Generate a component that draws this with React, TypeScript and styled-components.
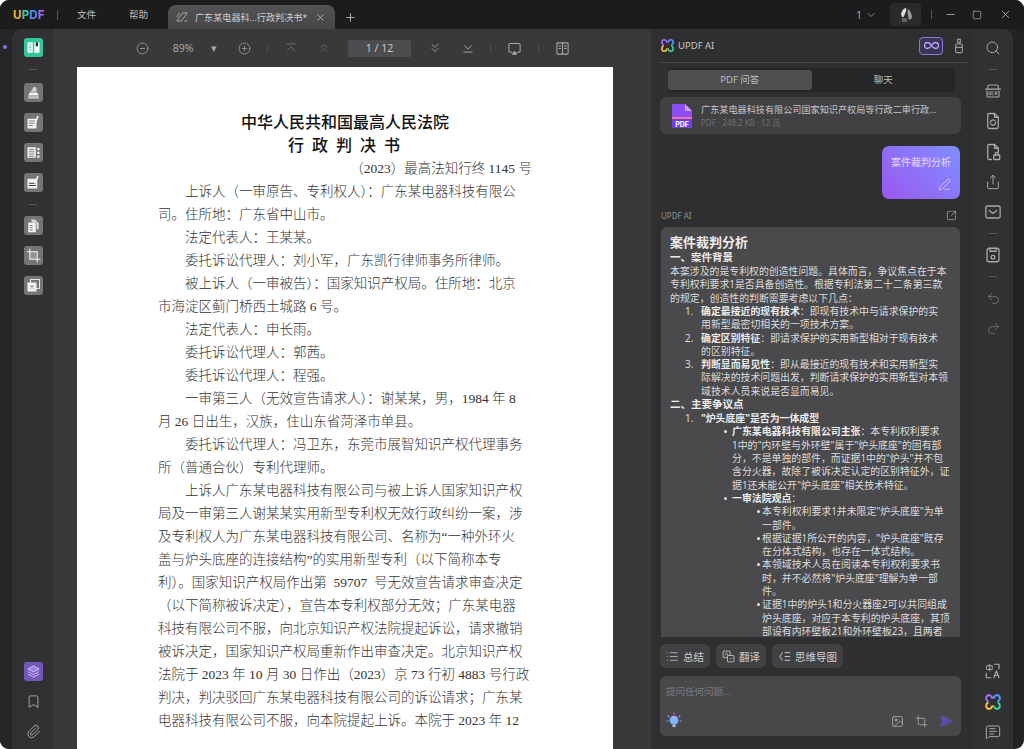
import React from "react";
import styled, { createGlobalStyle } from "styled-components";
import {
  Bookmark,
  ChevronDown,
  ChevronsDown,
  ChevronsUp,
  CircleMinus,
  CirclePlus,
  Crop,
  Image as ImageIcon,
  List,
  MessageSquareText,
  Minus,
  Paperclip,
  PenLine,
  Plus,
  Redo2,
  Search,
  SendHorizontal,
  Share,
  Square,
  SquareArrowOutUpRight,
  Undo2,
  X,
} from "lucide-react";

const SANS = `"Noto Sans", "Noto Sans CJK SC", sans-serif`;

const GlobalStyle = createGlobalStyle`
  html, body {
    margin: 0;
    padding: 0;
    background: #fff;
    overflow: hidden;
  }
  * { box-sizing: border-box; }
`;

const Win = styled.div`
  width: 1024px;
  height: 749px;
  display: flex;
  flex-direction: column;
  background: #222223;
  border-radius: 9px;
  overflow: hidden;
  font-family: ${SANS};
  color: #d8d8d8;
`;

const TitleBar = styled.div`
  height: 29px;
  flex: none;
  display: flex;
  align-items: flex-end;
  padding-left: 13px;
  background: #1c1c1d;
`;

const Logo = styled.div`
  width: 44px;
  height: 24px;
  line-height: 20px;
  font-size: 11.5px;
  font-weight: 700;
  font-family: "Inter", sans-serif;
  letter-spacing: 0.2px;
`;

const LogoLetter = styled.span<{ $c: string }>`
  color: ${(p) => p.$c};
`;

const BarSep = styled.div<{ $h?: number; $c?: string }>`
  width: 1px;
  height: ${(p) => p.$h ?? 10}px;
  background: ${(p) => p.$c ?? "#555"};
  flex: none;
`;

const TopMenu = styled.div`
  height: 24px;
  line-height: 20px;
  font-size: 9.6px;
  color: #bdbdbd;
  margin-left: 19px;
  width: 33px;
`;

const LogoSepWrap = styled.div`
  height: 24px;
  padding-top: 5px;
`;

const Tab = styled.div`
  width: 167px;
  height: 24px;
  margin-left: 6px;
  padding: 0 9px 0 7px;
  display: flex;
  align-items: center;
  background: linear-gradient(#535355, #464648);
  border-radius: 8px 8px 0 0;
  font-size: 9.1px;
  color: #cfcfcf;
  white-space: nowrap;
`;

const TabName = styled.span`
  flex: 1;
  margin-left: 6px;
`;

const NewTab = styled.div`
  height: 24px;
  margin-left: 9px;
  display: flex;
  align-items: center;
  color: #bdbdbd;
`;

const TitleRight = styled.div`
  margin-left: auto;
  height: 29px;
  display: flex;
  align-items: center;
  color: #a8a8a8;
`;

const PageCount = styled.div`
  display: flex;
  align-items: center;
  gap: 3px;
  font-size: 10.5px;
  margin-right: 13px;
`;

const Avatar = styled.div`
  width: 31px;
  height: 23px;
  border-radius: 4px;
  background: #2a2a2b;
  display: flex;
  align-items: center;
  justify-content: center;
  margin-right: 10px;
`;

const WinButton = styled.div<{ $w: number }>`
  width: ${(p) => p.$w}px;
  display: flex;
  justify-content: center;
  color: #b4b4b4;
`;

const Body = styled.div`
  flex: 1;
  min-height: 0;
  display: flex;
  margin: 0 11px 0 0;
  position: relative;
`;

const DotCol = styled.div`
  width: 12px;
  flex: none;
  background: #262627;
  display: flex;
  justify-content: center;
  padding: 16px 3px 0 0;
`;

const Dot = styled.div`
  width: 4px;
  height: 4px;
  border-radius: 50%;
  background: #8a75e0;
`;

const Panel = styled.div`
  flex: 1;
  min-width: 0;
  display: flex;
  border-radius: 10px 10px 0 0;
  overflow: hidden;
  background: #333335;
`;

const Rail = styled.div<{ $w: number }>`
  width: ${(p) => p.$w}px;
  flex: none;
  display: flex;
  flex-direction: column;
  align-items: center;
  background: #313133;
  padding-top: 4px;
  padding-bottom: 2px;
`;

const RailSep = styled.div<{ $after?: number }>`
  width: 8px;
  height: 1px;
  background: #5a5a5c;
  margin: 6px 0 ${(p) => p.$after ?? 6}px;
`;

const RailPush = styled.div`
  margin-top: auto;
  display: flex;
  flex-direction: column;
  align-items: center;
`;

const Tile = styled.div<{ $bg?: string }>`
  width: 19px;
  height: 19px;
  margin: 5px 0 6px;
  border-radius: 3px;
  background: ${(p) => p.$bg ?? "#757577"};
  display: flex;
  align-items: center;
  justify-content: center;
  color: #f2f2f2;
`;

const RailIcon = styled.div<{ $c?: string }>`
  width: 20px;
  height: 20px;
  margin: 5px 0 5.2px;
  display: flex;
  align-items: center;
  justify-content: center;
  color: ${(p) => p.$c ?? "#a9a9a9"};
`;

const Center = styled.div`
  width: 597px;
  flex: none;
  display: flex;
  flex-direction: column;
  background: #39393b;
`;

const Toolbar = styled.div`
  height: 38px;
  flex: none;
  display: flex;
  align-items: center;
  padding-left: 71px;
  color: #a6a6a6;
`;

const ToolCell = styled.div<{ $w: number; $c?: string }>`
  width: ${(p) => p.$w}px;
  flex: none;
  display: flex;
  align-items: center;
  justify-content: center;
  font-size: 10.5px;
  color: ${(p) => p.$c ?? "inherit"};
`;

const PageBox = styled.div`
  width: 63px;
  height: 17px;
  margin-left: 14px;
  flex: none;
  border-radius: 2px;
  background: #4d4d4f;
  color: #c8c8c8;
  font-size: 10.5px;
  line-height: 17px;
  text-align: center;
`;

const DocArea = styled.div`
  flex: 1;
  min-height: 0;
  padding-left: 23px;
  overflow: hidden;
`;

const Page = styled.div`
  width: 536px;
  height: 700px;
  background: #fff;
  color: #333;
  padding: 44px 0 0 81px;
  font-family: "Liberation Serif", "Noto Sans CJK SC", serif;
  font-size: 13.5px;
  font-weight: 300;
  line-height: 23px;
  white-space: nowrap;
  overflow: hidden;
`;

const DocTitle = styled.div<{ $spaced?: boolean }>`
  width: 374px;
  text-align: center;
  font-family: ${SANS};
  font-size: 16px;
  font-weight: 500;
  color: #111;
  letter-spacing: ${(p) => (p.$spaced ? "8px" : "0")};
  margin-left: ${(p) => (p.$spaced ? "3px" : "0")};
`;

const CaseNo = styled.div`
  width: 374px;
  text-align: right;
`;

const DocLine = styled.div<{ $indent?: boolean }>`
  padding-left: ${(p) => (p.$indent ? "27px" : "0")};
`;

const AiPanel = styled.div`
  flex: 1;
  min-width: 0;
  display: flex;
  flex-direction: column;
  padding: 0 12px 14px 9px;
  background: #2f2f31;
`;

const AiHead = styled.div`
  height: 34px;
  flex: none;
  display: flex;
  align-items: center;
  border-bottom: 1px solid #4a4a4c;
  font-size: 9.5px;
  color: #c9c9c9;
  gap: 3px;
  margin-right: -6px;
  padding-right: 2px;
`;

const AiHeadRight = styled.div`
  margin-left: auto;
  display: flex;
  align-items: center;
  gap: 10px;
`;

const InfinityBadge = styled.div`
  width: 24px;
  height: 18px;
  border: 1px solid #8f76d8;
  border-radius: 4px;
  background: #3a3550;
  color: #b9a2ff;
  display: flex;
  align-items: center;
  justify-content: center;
`;

const Tabs = styled.div`
  height: 24px;
  flex: none;
  margin: 5px 6px 0 8px;
  padding: 2px 0;
  display: flex;
  border-radius: 3px;
  background: #262628;
`;

const TabBtn = styled.div<{ $on?: boolean }>`
  flex: 1;
  border-radius: 3px;
  background: ${(p) => (p.$on ? "#4e4e50" : "transparent")};
  font-size: 9.5px;
  line-height: 20px;
  text-align: center;
  color: #bdbdbd;
`;

const FileCard = styled.div`
  height: 37px;
  flex: none;
  margin-top: 5px;
  border-radius: 6px;
  background: #414143;
  display: flex;
  align-items: center;
  padding-left: 12px;
  gap: 9px;
`;

const FileMeta = styled.div`
  display: flex;
  flex-direction: column;
  white-space: nowrap;
`;

const FileName = styled.div`
  font-size: 9.15px;
  line-height: 13px;
  color: #c6c6c6;
`;

const FileSub = styled.div`
  font-size: 8px;
  line-height: 13px;
  color: #6f6f71;
`;

const Bubble = styled.div`
  width: 78px;
  height: 53px;
  flex: none;
  margin: 12px 1px 0 auto;
  border-radius: 7px;
  background: linear-gradient(45deg, #9a58f0, #7f8eff);
  padding: 8px 9px;
  display: flex;
  flex-direction: column;
  align-items: flex-end;
  justify-content: space-between;
  font-size: 10px;
  color: #e6dcff;
  white-space: nowrap;
`;

const AiLabelRow = styled.div`
  height: 16px;
  flex: none;
  margin-top: 8px;
  padding: 0 4px 0 1px;
  display: flex;
  align-items: center;
  justify-content: space-between;
  font-size: 8px;
  color: #8f8f91;
`;

const Answer = styled.div`
  flex: none;
  height: 410px;
  margin: 4px 1px 0 1px;
  padding: 6px 9px 0;
  border-radius: 6px 6px 0 0;
  background: #4a4a4c;
  overflow: hidden;
  font-size: 9.9px;
  line-height: 13.3px;
  color: #dcdcdc;
  white-space: nowrap;
`;

const AnswerTitle = styled.div`
  font-size: 13px;
  line-height: 18px;
  font-weight: 700;
  color: #ececec;
`;

const AnswerHead = styled.div`
  font-size: 10.5px;
  font-weight: 700;
  color: #ececec;
  margin-bottom: 0.8px;
`;

const OrderedList = styled.ol`
  margin: 0;
  padding-left: 31px;
  > li::marker {
    content: counter(list-item) ".   ";
  }
`;

const BulletList = styled.ul<{ $pad: number }>`
  margin: 0;
  padding-left: ${(p) => p.$pad}px;
  list-style: none;
`;

const Bullet = styled.li<{ $off?: number }>`
  position: relative;
  &::before {
    content: "";
    position: absolute;
    left: -${(p) => p.$off ?? 8}px;
    top: 5px;
    width: 3px;
    height: 3px;
    border-radius: 50%;
    background: #e8e8e8;
  }
`;

const Strong = styled.b`
  font-weight: 700;
  color: #ececec;
`;

const ChipRow = styled.div`
  flex: none;
  display: flex;
  gap: 6px;
  margin-top: 7px;
`;

const Chip = styled.div`
  height: 24px;
  padding: 0 6px;
  display: flex;
  align-items: center;
  gap: 4px;
  border-radius: 6px;
  background: #414143;
  font-size: 10.5px;
  color: #cfcfcf;
`;

const InputBox = styled.div`
  height: 60px;
  flex: none;
  margin-top: 8px;
  padding: 9px 6px 6px;
  border-radius: 6px;
  background: #48484a;
  display: flex;
  flex-direction: column;
  justify-content: space-between;
`;

const Placeholder = styled.div`
  font-size: 9.5px;
  line-height: 14px;
  color: #7b7b7d;
`;

const InputTools = styled.div`
  display: flex;
  align-items: center;
  gap: 11px;
  padding-right: 2px;
  color: #b0b0b0;
`;

const Bulb = styled.div`
  width: 16px;
  height: 18px;
  margin-right: auto;
  display: flex;
  align-items: center;
  justify-content: center;
`;

type SvgProps = { size?: number };

const Svg = ({ size = 16, children }: SvgProps & { children: React.ReactNode }) => (
  <svg width={size} height={size} viewBox="0 0 24 24" fill="none" stroke="currentColor" strokeWidth="1.7" strokeLinecap="round" strokeLinejoin="round">
    {children}
  </svg>
);

// four-lobe ai mark
const AiMark = ({ size = 16 }: SvgProps) => (
  <svg width={size} height={size} viewBox="0 0 24 24" fill="none" strokeWidth="2.6" strokeLinecap="round">
    <path d="M11 6.500C10 3 6.500 2 4.500 3.500S2 8.500 5 11" stroke="#a66bff" />
    <path d="M13 6.500C14 3 17.500 2 19.500 3.500S22 8.500 19 11" stroke="#4f9bff" />
    <path d="M5 13C2 15.500 2.500 19 4.500 20.500S10 21 11 17.500" stroke="#ffc233" />
    <path d="M19 13C22 15.500 21.500 19 19.500 20.500S14 21 13 17.500" stroke="#35d6a0" />
  </svg>
);

const FirstPage = () => (
  <Svg size={14}>
    <path d="M5 5h14" />
    <path d="M6 16l6-6 6 6" />
  </Svg>
);

const LastPage = () => (
  <Svg size={14}>
    <path d="M6 8l6 6 6-6" />
    <path d="M5 19h14" />
  </Svg>
);

const Present = () => (
  <Svg size={15}>
    <path d="M8 18H5a2 2 0 0 1-2-2V6a2 2 0 0 1 2-2h14a2 2 0 0 1 2 2v10a2 2 0 0 1-2 2h-3" />
    <path d="M9 21l3-4 3 4z" fill="currentColor" />
  </Svg>
);

const Spread = () => (
  <Svg size={15}>
    <rect x="3" y="3" width="18" height="18" rx="1.500" />
    <path d="M12 3v18M6 8h3M6 12h3M15 8h3M15 12h3" />
  </Svg>
);

const OcrIcon = () => (
  <svg width="18" height="18" viewBox="0 0 24 24" fill="none" stroke="currentColor" strokeWidth="1.5" strokeLinecap="round">
    <path d="M5 9V6a2 2 0 0 1 2-2h10a2 2 0 0 1 2 2v3" />
    <path d="M2 9.500h20" />
    <path d="M4 12v7a1 1 0 0 0 1 1h14a1 1 0 0 0 1-1v-7" />
    <path d="M7 13h2v4H7zM12.500 13h-2v4h2M15 17v-4h2v2h-2M16.400 15l1 2" strokeWidth="1" />
  </svg>
);

const FileRefresh = () => (
  <Svg size={18}>
    <path d="M14 2H7a2 2 0 0 0-2 2v16a2 2 0 0 0 2 2h10a2 2 0 0 0 2-2V7z" />
    <path d="M14 2v5h5" />
    <path d="M8.500 14a3.500 3.500 0 0 1 6-2.400M15.500 14a3.500 3.500 0 0 1-6 2.400" />
  </Svg>
);

const FileLock = () => (
  <Svg size={18}>
    <path d="M10 22H7a2 2 0 0 1-2-2V4a2 2 0 0 1 2-2h7l5 5v5" />
    <path d="M14 2v5h5" />
    <rect x="13" y="16" width="8" height="6" rx="1" />
    <path d="M15 16v-1.500a2 2 0 0 1 4 0V16" />
  </Svg>
);

const MailBox = () => (
  <Svg size={18}>
    <rect x="2.500" y="4" width="19" height="16" rx="2" />
    <path d="M7 10l5 4 5-4" />
  </Svg>
);

const SaveIcon = () => (
  <Svg size={18}>
    <rect x="4" y="3" width="16" height="18" rx="3" />
    <path d="M8 3v4h8V3" />
    <circle cx="12" cy="15" r="2.500" />
  </Svg>
);

const Translate = () => (
  <svg width="18" height="18" viewBox="0 0 24 24" fill="none" stroke="currentColor" strokeWidth="1.6" strokeLinecap="round" strokeLinejoin="round">
    <path d="M14 3h6v6M3 15v6h6" />
    <rect x="4" y="5" width="7" height="5" strokeWidth="1.3" />
    <path d="M7.500 3v9" strokeWidth="1.3" />
    <path d="M13 21l3.500-9 3.500 9M14.200 18h4.600" />
  </svg>
);

const TransChip = () => (
  <svg width="13" height="13" viewBox="0 0 24 24" fill="none" stroke="currentColor" strokeWidth="1.5">
    <rect x="2" y="2" width="13" height="12" rx="1" />
    <rect x="10" y="10" width="12" height="12" rx="1" fill="#414143" />
    <path d="M6 10l2.500-5 2.500 5M14 16h4" strokeWidth="1.2" />
  </svg>
);

const MindMap = () => (
  <svg width="13" height="13" viewBox="0 0 24 24" fill="none" stroke="currentColor" strokeWidth="1.7" strokeLinecap="round">
    <path d="M13 5h9M13 12h9M13 19h9" />
    <path d="M8 5C5 5 6 12 3 12c3 0 2 7 5 7" />
  </svg>
);

const InfinityGlyph = () => (
  <svg width="15" height="9" viewBox="0 0 30 16" fill="none" stroke="currentColor" strokeWidth="2.6">
    <path d="M15 8c-3-5-5-6-8-6a6 6 0 0 0 0 12c3 0 5-1 8-6s5-6 8-6a6 6 0 0 1 0 12c-3 0-5-1-8-6z" />
  </svg>
);

const Bottle = () => (
  <svg width="12" height="16" viewBox="0 0 16 24" fill="none" stroke="#9c9c9e" strokeWidth="1.7">
    <path d="M6 2h4v5H6z" />
    <rect x="3" y="9" width="10" height="13" rx="2" />
    <path d="M3 14h10" />
  </svg>
);

const PdfFile = () => (
  <svg width="20" height="24" viewBox="0 0 20 24">
    <path d="M1 0h12l7 7v17H1a1 1 0 0 1-1-1V1a1 1 0 0 1 1-1z" fill="#8c4df2" />
    <path d="M13 0l7 7h-6a1 1 0 0 1-1-1z" fill="#c7a3ff" />
    <rect x="0" y="13" width="20" height="2" fill="#ff6fa8" />
    <rect x="0" y="15" width="20" height="9" fill="#6d3fe0" />
    <text x="10" y="22.500" fontSize="7" fontWeight="700" textAnchor="middle" fill="#fff" fontFamily="Inter, sans-serif">PDF</text>
  </svg>
);

const BulbIcon = () => (
  <svg width="16" height="18" viewBox="0 0 24 26" fill="none">
    <circle cx="12" cy="12" r="6.500" fill="#7fb4ff" />
    <path d="M8 8a6 6 0 0 1 8 0" stroke="#c49bff" strokeWidth="2" />
    <rect x="9.500" y="19" width="5" height="3" rx="1" fill="#c9b4ff" />
    <path d="M12 1v2M3 5l2 2M21 5l-2 2M1 13h2M21 13h2" stroke="#a88cf0" strokeWidth="1.6" strokeLinecap="round" />
  </svg>
);

const TabMark = () => (
  <svg width="14" height="14" viewBox="0 0 24 24" fill="none" stroke="#a9a9a9" strokeWidth="1.7">
    <path d="M3 19L13 5h8L11 19z" />
    <path d="M16 19h5" />
    <path d="M3 12l5-7" />
  </svg>
);

const AvatarPic = () => (
  <svg width="16" height="18" viewBox="0 0 16 18">
    <path d="M1 18c0-8 2-16 7-16s7 8 7 16z" fill="#2d2d2e" />
    <path d="M3 8c1-4 3-6 5-6 1 2-1 6-2 8s-2 2-3-2z" fill="#dcdcdc" />
    <path d="M10 3c2 1 4 5 4 9l-3 2c-1-4-2-7-1-11z" fill="#9a9a9a" />
    <rect x="4" y="12" width="5" height="4" fill="#606060" />
  </svg>
);

// left rail glyphs, white on a grey tile
const Highlighter = () => (
  <svg width="15" height="15" viewBox="0 0 20 20" fill="currentColor">
    <path d="M11 2l3 2v5H6z" opacity=".75" />
    <path d="M5 10h10l2 4H3z" />
    <rect x="3" y="15" width="14" height="3" opacity=".7" />
  </svg>
);

const EditText = () => (
  <svg width="15" height="15" viewBox="0 0 20 20" fill="currentColor">
    <rect x="2" y="5" width="12" height="13" />
    <path d="M4 8h8M4 11h8M4 14h5" stroke="#757577" strokeWidth="1.2" />
    <path d="M15 1l2 1-4 10-2 1 0-2z" />
  </svg>
);

const Columns = () => (
  <svg width="15" height="15" viewBox="0 0 20 20" fill="currentColor">
    <rect x="2" y="3" width="11" height="14" />
    <path d="M4 6h7M4 9h7M4 12h7M4 15h7" stroke="#757577" strokeWidth="1.2" />
    <rect x="15" y="4" width="3" height="3" />
    <rect x="15" y="9" width="3" height="3" />
    <rect x="15" y="14" width="3" height="3" />
  </svg>
);

const FormIcon = () => (
  <svg width="15" height="15" viewBox="0 0 20 20" fill="currentColor">
    <rect x="2" y="5" width="13" height="13" />
    <path d="M4 11h9M4 14h9" stroke="#333" strokeWidth="1.6" />
    <path d="M15 1l2 1-4 9-2 1 0-2z" />
  </svg>
);

const PagesIcon = () => (
  <svg width="15" height="15" viewBox="0 0 20 20" fill="currentColor">
    <path d="M6 2h6l5 5v8h-3V6h-5z" opacity=".8" />
    <rect x="3" y="6" width="10" height="13" />
    <path d="M5 10h4M5 13h4M5 16h4" stroke="#757577" strokeWidth="1.2" />
  </svg>
);

const CropTile = () => (
  <svg width="15" height="15" viewBox="0 0 20 20" fill="none" stroke="currentColor" strokeWidth="1.4">
    <path d="M5 1v14h14M1 5h14v14" />
    <rect x="5" y="5" width="10" height="10" fill="currentColor" opacity=".25" stroke="none" />
  </svg>
);

const StackTile = () => (
  <svg width="15" height="15" viewBox="0 0 20 20" fill="currentColor">
    <rect x="6" y="2" width="12" height="12" fill="none" stroke="currentColor" strokeWidth="1.2" />
    <rect x="2" y="6" width="12" height="12" />
    <path d="M6 10l4 4M10 10l-4 4" stroke="#757577" strokeWidth="1.4" />
  </svg>
);

const ReaderTile = () => (
  <svg width="15" height="15" viewBox="0 0 20 20" fill="#f4fff9">
    <path d="M2 3h7v14H2zM11 3h7v14h-7z" />
    <path d="M4 7h3M4 10h3M4 13h3" stroke="#2fc79b" strokeWidth="1.2" />
    <path d="M13 3h3v6l-1.500-1.500L13 9z" fill="#2a2a2a" />
  </svg>
);

const LayersTile = () => (
  <svg width="15" height="15" viewBox="0 0 24 24" fill="none" stroke="#cdbdff" strokeWidth="1.6" strokeLinejoin="round">
    <path d="M12 3l9 5-9 5-9-5z" fill="#cdbdff" fillOpacity=".45" />
    <path d="M3 12l9 5 9-5M3 16l9 5 9-5" />
  </svg>
);

const docLines: [string, boolean][] = [
  ["上诉人（一审原告、专利权人）：广东某电器科技有限公", true],
  ["司。住所地：广东省中山市。", false],
  ["法定代表人：王某某。", true],
  ["委托诉讼代理人：刘小军，广东凯行律师事务所律师。", true],
  ["被上诉人（一审被告）：国家知识产权局。住所地：北京", true],
  ["市海淀区蓟门桥西土城路 6 号。", false],
  ["法定代表人：申长雨。", true],
  ["委托诉讼代理人：郭茜。", true],
  ["委托诉讼代理人：程强。", true],
  ["一审第三人（无效宣告请求人）：谢某某，男，1984 年 8", true],
  ["月 26 日出生，汉族，住山东省菏泽市单县。", false],
  ["委托诉讼代理人：冯卫东，东莞市展智知识产权代理事务", true],
  ["所（普通合伙）专利代理师。", false],
  ["上诉人广东某电器科技有限公司与被上诉人国家知识产权", true],
  ["局及一审第三人谢某某实用新型专利权无效行政纠纷一案，涉", false],
  ["及专利权人为广东某电器科技有限公司、名称为“一种外环火", false],
  ["盖与炉头底座的连接结构”的实用新型专利（以下简称本专", false],
  ["利）。国家知识产权局作出第\u00a0\u00a059707\u00a0\u00a0号无效宣告请求审查决定", false],
  ["（以下简称被诉决定），宣告本专利权部分无效；广东某电器", false],
  ["科技有限公司不服，向北京知识产权法院提起诉讼，请求撤销", false],
  ["被诉决定，国家知识产权局重新作出审查决定。北京知识产权", false],
  ["法院于 2023 年 10 月 30 日作出（2023）京 73 行初 4883 号行政", false],
  ["判决，判决驳回广东某电器科技有限公司的诉讼请求；广东某", false],
  ["电器科技有限公司不服，向本院提起上诉。本院于 2023 年 12", false],
];

export default function App() {
  return (
    <>
      <GlobalStyle />
      <Win>
        <TitleBar>
          <Logo>
            <LogoLetter $c="#f2b632">U</LogoLetter>
            <LogoLetter $c="#3fc6a8">P</LogoLetter>
            <LogoLetter $c="#5a8cf5">D</LogoLetter>
            <LogoLetter $c="#a66bf0">F</LogoLetter>
          </Logo>
          <LogoSepWrap>
            <BarSep />
          </LogoSepWrap>
          <TopMenu>文件</TopMenu>
          <TopMenu>帮助</TopMenu>
          <Tab>
            <TabMark />
            <TabName>广东某电器科...行政判决书*</TabName>
            <X size={11} strokeWidth={1.6} />
          </Tab>
          <NewTab>
            <Plus size={13} strokeWidth={1.6} />
          </NewTab>
          <TitleRight>
            <PageCount>
              1 <ChevronDown size={12} strokeWidth={1.4} />
            </PageCount>
            <Avatar>
              <AvatarPic />
            </Avatar>
            <BarSep $h={9} />
            <WinButton $w={36}>
              <Minus size={13} strokeWidth={1.5} />
            </WinButton>
            <WinButton $w={18}>
              <Square size={10} strokeWidth={1.6} />
            </WinButton>
            <WinButton $w={38}>
              <X size={13} strokeWidth={1.5} />
            </WinButton>
          </TitleRight>
        </TitleBar>
        <Body>
          <DotCol>
            <Dot />
          </DotCol>
          <Panel>
            <Rail $w={42}>
              <Tile $bg="#2fc79b">
                <ReaderTile />
              </Tile>
              <RailSep $after={8} />
              <Tile><Highlighter /></Tile>
              <Tile><EditText /></Tile>
              <Tile><Columns /></Tile>
              <Tile><FormIcon /></Tile>
              <RailSep />
              <Tile><PagesIcon /></Tile>
              <Tile><CropTile /></Tile>
              <Tile><StackTile /></Tile>
              <RailPush>
                <Tile $bg="#7358b8"><LayersTile /></Tile>
                <RailIcon><Bookmark size={15} strokeWidth={1.5} /></RailIcon>
                <RailIcon><Paperclip size={15} strokeWidth={1.5} /></RailIcon>
              </RailPush>
            </Rail>
            <Center>
              <Toolbar>
                <ToolCell $w={34}><CircleMinus size={13} strokeWidth={1.4} /></ToolCell>
                <ToolCell $w={48}>89%</ToolCell>
                <ToolCell $w={14}>▾</ToolCell>
                <ToolCell $w={46}><CirclePlus size={13} strokeWidth={1.4} /></ToolCell>
                <BarSep $h={9} $c="#4c4c4e" />
                <ToolCell $w={46} $c="#707072"><FirstPage /></ToolCell>
                <ToolCell $w={20} $c="#707072"><ChevronsUp size={14} strokeWidth={1.5} /></ToolCell>
                <PageBox>1 / 12</PageBox>
                <ToolCell $w={48}><ChevronsDown size={14} strokeWidth={1.5} /></ToolCell>
                <ToolCell $w={18}><LastPage /></ToolCell>
                <ToolCell $w={13} />
                <BarSep $h={9} $c="#4c4c4e" />
                <ToolCell $w={47}><Present /></ToolCell>
                <BarSep $h={9} $c="#4c4c4e" />
                <ToolCell $w={47}><Spread /></ToolCell>
              </Toolbar>
              <DocArea>
                <Page>
                  <DocTitle>中华人民共和国最高人民法院</DocTitle>
                  <DocTitle $spaced>行政判决书</DocTitle>
                  <CaseNo>（2023）最高法知行终 1145 号</CaseNo>
                  {docLines.map(([text, indent]) => (
                    <DocLine key={text} $indent={indent}>
                      {text}
                    </DocLine>
                  ))}
                </Page>
              </DocArea>
            </Center>
            <AiPanel>
              <AiHead>
                <AiMark size={15} />
                UPDF AI
                <AiHeadRight>
                  <InfinityBadge><InfinityGlyph /></InfinityBadge>
                  <Bottle />
                </AiHeadRight>
              </AiHead>
              <Tabs>
                <TabBtn $on>PDF 问答</TabBtn>
                <TabBtn>聊天</TabBtn>
              </Tabs>
              <FileCard>
                <PdfFile />
                <FileMeta>
                  <FileName>广东某电器科技有限公司国家知识产权局等行政二审行政...</FileName>
                  <FileSub>PDF · 248.2 KB · 12 页</FileSub>
                </FileMeta>
              </FileCard>
              <Bubble>
                案件裁判分析
                <PenLine size={13} strokeWidth={1.5} />
              </Bubble>
              <AiLabelRow>
                UPDF AI
                <SquareArrowOutUpRight size={11} strokeWidth={1.5} color="#b5b5b5" />
              </AiLabelRow>
              <Answer>
                <AnswerTitle>案件裁判分析</AnswerTitle>
                <AnswerHead>一、案件背景</AnswerHead>
                本案涉及的是专利权的创造性问题。具体而言，争议焦点在于本
                <br />
                专利权利要求1是否具备创造性。根据专利法第二十二条第三款
                <br />
                的规定，创造性的判断需要考虑以下几点：
                <OrderedList>
                  <li>
                    <Strong>确定最接近的现有技术</Strong>：即现有技术中与请求保护的实
                    <br />
                    用新型最密切相关的一项技术方案。
                  </li>
                  <li>
                    <Strong>确定区别特征</Strong>：即请求保护的实用新型相对于现有技术
                    <br />
                    的区别特征。
                  </li>
                  <li>
                    <Strong>判断显而易见性</Strong>：即从最接近的现有技术和实用新型实
                    <br />
                    际解决的技术问题出发，判断请求保护的实用新型对本领
                    <br />
                    域技术人员来说是否显而易见。
                  </li>
                </OrderedList>
                <AnswerHead>二、主要争议点</AnswerHead>
                <OrderedList>
                  <li>
                    <Strong>"炉头底座"是否为一体成型</Strong>
                    <BulletList $pad={31}>
                      <Bullet>
                        <Strong>广东某电器科技有限公司主张</Strong>：本专利权利要求
                        <br />
                        1中的"内环壁与外环壁"属于"炉头底座"的固有部
                        <br />
                        分，不是单独的部件，而证据1中的"炉头"并不包
                        <br />
                        含分火器，故除了被诉决定认定的区别特征外，证
                        <br />
                        据1还未能公开"炉头底座"相关技术特征。
                      </Bullet>
                      <Bullet>
                        <Strong>一审法院观点</Strong>：
                        <BulletList $pad={30}>
                          <Bullet $off={5}>
                            本专利权利要求1并未限定"炉头底座"为单
                            <br />
                            一部件。
                          </Bullet>
                          <Bullet $off={5}>
                            根据证据1所公开的内容，"炉头底座"既存
                            <br />
                            在分体式结构，也存在一体式结构。
                          </Bullet>
                          <Bullet $off={5}>
                            本领域技术人员在阅读本专利权利要求书
                            <br />
                            时，并不必然将"炉头底座"理解为单一部
                            <br />
                            件。
                          </Bullet>
                          <Bullet $off={5}>
                            证据1中的炉头1和分火器座2可以共同组成
                            <br />
                            炉头底座，对应于本专利的炉头底座，其顶
                            <br />
                            部设有内环壁板21和外环壁板23，且两者
                          </Bullet>
                        </BulletList>
                      </Bullet>
                    </BulletList>
                  </li>
                </OrderedList>
              </Answer>
              <ChipRow>
                <Chip><List size={13} strokeWidth={1.3} />总结</Chip>
                <Chip><TransChip />翻译</Chip>
                <Chip><MindMap />思维导图</Chip>
              </ChipRow>
              <InputBox>
                <Placeholder>提问任何问题...</Placeholder>
                <InputTools>
                  <Bulb><BulbIcon /></Bulb>
                  <ImageIcon size={13} strokeWidth={1.5} />
                  <Crop size={13} strokeWidth={1.5} />
                  <SendHorizontal size={14} color="#5f4aa8" fill="#5f4aa8" />
                </InputTools>
              </InputBox>
            </AiPanel>
            <Rail $w={40}>
              <RailIcon><Search size={16} strokeWidth={1.5} /></RailIcon>
              <RailSep />
              <RailIcon><OcrIcon /></RailIcon>
              <RailIcon><FileRefresh /></RailIcon>
              <RailIcon><FileLock /></RailIcon>
              <RailIcon><Share size={16} strokeWidth={1.5} /></RailIcon>
              <RailIcon><MailBox /></RailIcon>
              <RailSep />
              <RailIcon><SaveIcon /></RailIcon>
              <RailSep />
              <RailIcon $c="#6f6f71"><Undo2 size={15} strokeWidth={1.5} /></RailIcon>
              <RailIcon $c="#6f6f71"><Redo2 size={15} strokeWidth={1.5} /></RailIcon>
              <RailPush>
                <RailIcon><Translate /></RailIcon>
                <RailIcon><AiMark size={18} /></RailIcon>
                <RailIcon><MessageSquareText size={16} strokeWidth={1.5} /></RailIcon>
              </RailPush>
            </Rail>
          </Panel>
        </Body>
      </Win>
    </>
  );
}
